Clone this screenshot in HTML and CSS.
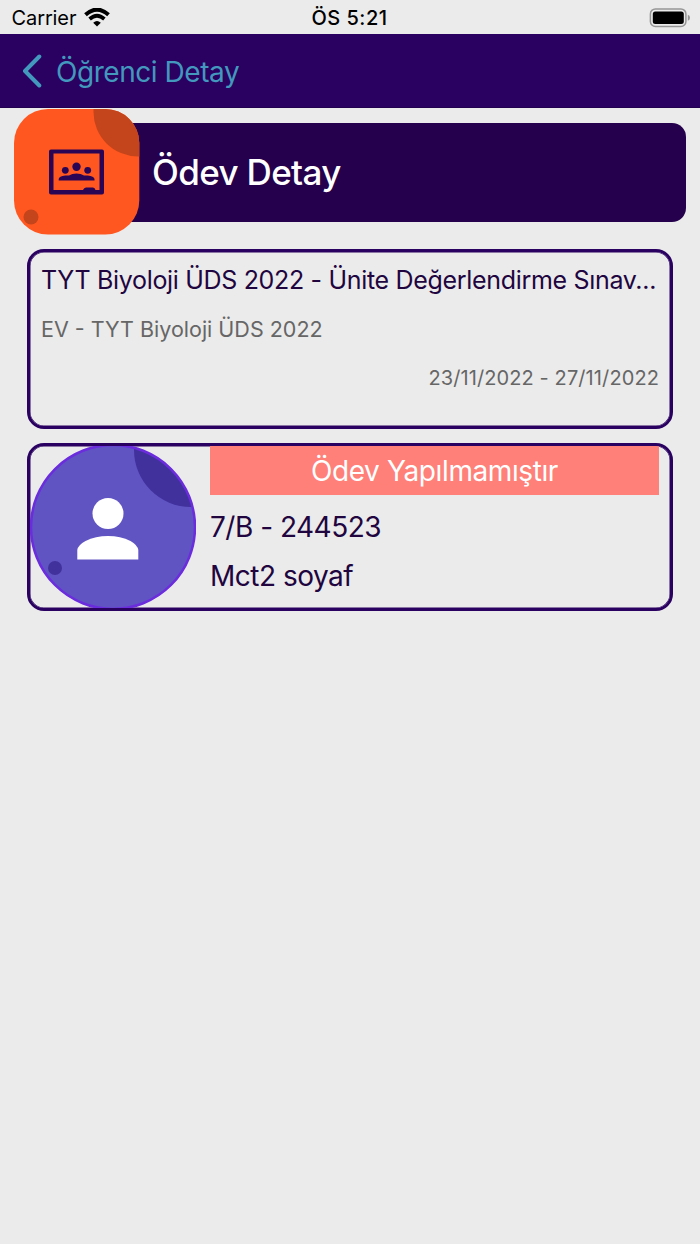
FILE: index.html
```html
<!DOCTYPE html>
<html lang="tr">
<head>
<meta charset="utf-8">
<title>Ödev Detay</title>
<link rel="stylesheet" href="styles.css">
</head>
<body>
<div class="status">
  <div class="status-left"><span class="carrier">Carrier</span>
    <svg class="wifi" width="26" height="19" viewBox="0 0 26 19">
      <path d="M1.500 6.800Q13-3.600 24.500 6.800" fill="none" stroke="#000" stroke-width="4"/>
      <path d="M5.600 11Q13 4.400 20.400 11" fill="none" stroke="#000" stroke-width="3.700"/>
      <path d="M9.200 14.800Q13 11.200 16.800 14.800L13 18.500Z"/>
    </svg>
  </div>
  <span class="time">ÖS 5:21</span>
  <svg class="battery" width="42" height="20" viewBox="0 0 42 20">
    <rect x="1.400" y="0.900" width="35.500" height="17.600" rx="5" fill="none" stroke="#969696" stroke-width="1.500"/>
    <rect x="3.800" y="3.500" width="31" height="12.500" rx="2.500" fill="#000"/>
    <path d="M38.800 6.800Q41 7.500 41 9.800T38.800 12.800Z" fill="#969696"/>
  </svg>
</div>
<nav class="nav">
  <svg class="back" width="20" height="34" viewBox="0 0 20 34"><path d="M17.300 2.500L3 17L17.300 31.500" fill="none" stroke="#4298bd" stroke-width="4" stroke-linecap="round" stroke-linejoin="round"/></svg>
  <span class="nav-title">Öğrenci Detay</span>
</nav>
<main class="page">
  <header class="hero">
    <svg class="tile" width="126" height="126" viewBox="0 0 126 126">
      <clipPath id="tile"><rect width="125.300" height="125.500" rx="34"/></clipPath>
      <g clip-path="url(#tile)">
        <rect width="126" height="126" fill="#ff571f"/>
        <circle cx="124" cy="3" r="44.500" fill="#c4441b"/>
      </g>
      <circle cx="17" cy="108" r="7.500" fill="#c4441b"/>
      <g fill="#2a0555">
        <path fill-rule="evenodd" d="M37 40.500H88Q90 40.500 90 42.500V83.500Q90 85.500 88 85.500H37Q35 85.500 35 83.500V42.500Q35 40.500 37 40.500ZM39.500 44.500V81H69Q70 78.500 72 78.500H79Q81 78.500 81.500 81H85.500V44.500Z"/>
        <circle cx="51.300" cy="61.300" r="3.400"/><circle cx="62.500" cy="57.700" r="4.200"/><circle cx="73.700" cy="61.300" r="3.400"/>
        <path d="M44.700 71.500V70Q45 67 51.300 66.500L55 66.600Q58 64.500 62.500 64.500T70 66.600L73.700 66.500Q80 67 80.500 70V71.500Z"/>
      </g>
    </svg>
    <div class="banner"><h1 class="title">Ödev Detay</h1></div>
  </header>
  <section class="card homework">
    <span class="hw-name">TYT Biyoloji ÜDS 2022 - Ünite Değerlendirme Sınav...</span>
    <span class="hw-source">EV - TYT Biyoloji ÜDS 2022</span>
    <span class="hw-dates">23/11/2022 - 27/11/2022</span>
  </section>
  <section class="card student">
    <svg class="avatar" width="166" height="162" viewBox="0 0 166 162">
      <clipPath id="avatar"><circle cx="83" cy="81" r="82"/></clipPath>
      <circle cx="83" cy="81" r="82.500" fill="#6054c3"/>
      <circle cx="161" cy="4" r="57" fill="#41319c" clip-path="url(#avatar)"/>
      <circle cx="83" cy="81" r="82" fill="none" stroke="#6b2cdd" stroke-width="2.500"/>
      <circle cx="25" cy="122" r="7" fill="#41319c"/>
      <circle cx="78" cy="67.500" r="15.500" fill="#fff"/>
      <path d="M47.300 113.500V104Q48 99 55.500 95Q65.500 90 78 90T100.500 95Q107.500 99 108.300 104V113.500Z" fill="#fff"/>
    </svg>
    <div class="info">
      <div class="state"><span class="state-text">Ödev Yapılmamıştır</span></div>
      <span class="number">7/B - 244523</span>
      <span class="name">Mct2 soyaf</span>
    </div>
  </section>
</main>
</body>
</html>
```
FILE: styles.css
```css
* { box-sizing: border-box; }
body { margin: 0; min-height: 1244px; background: #ebebeb; font-family: Inter, "Liberation Sans", sans-serif; color: #21053f; }
svg { display: block; flex: none; }
span, h1 { white-space: nowrap; }
.status { height: 34px; display: grid; grid-template-columns: 1fr auto 1fr; align-items: center; padding: 0 9px 0 11px; color: #000; }
.status-left { display: flex; align-items: center; gap: 8px; }
.carrier { font-size: 20px; line-height: 34px; letter-spacing: -0.1px; padding: 1px 0 0 0.500px; }
.time { font-size: 20px; font-weight: 500; line-height: 34px; letter-spacing: 0.500px; padding: 1px 3px 0 0; }
.battery { justify-self: end; }
.nav { height: 74px; display: flex; align-items: center; gap: 14px; padding-left: 22px; background: #2a0061; border-bottom: 1px solid #23004f; }
.nav-title { color: #4298bd; font-size: 28px; line-height: 40px; letter-spacing: -0.450px; padding-top: 2px; }
.page { padding: 1px 14px 0; }
.hero { display: flex; align-items: center; height: 126px; }
.tile { z-index: 1; }
.banner { flex: 1; height: 99px; margin-left: -20px; padding-left: 32px; display: flex; align-items: center; background: #25004c; border-radius: 0 14px 14px 0; }
.title { margin: 0; color: #fff; font-size: 35px; font-weight: 500; line-height: 44px; letter-spacing: -0.650px; }
.card { margin: 14px 13px 0; border: 3px solid #2a0061; border-radius: 17px; overflow: hidden; display: flex; box-shadow: inset 0 0 0 0.500px #2a0061; }
.homework { height: 180px; flex-direction: column; padding: 11px 11px 0; }
.hw-name { font-size: 25px; line-height: 34px; letter-spacing: -0.320px; }
.hw-source { margin-top: 17px; color: #666; font-size: 21.500px; line-height: 30px; }
.hw-dates { margin-top: 19px; align-self: flex-end; color: #666; font-size: 20px; line-height: 30px; letter-spacing: 0.100px; }
.student { height: 168px; padding-right: 11px; gap: 14px; }
.info { flex: 1; display: flex; flex-direction: column; }
.state { height: 49px; background: #ff7f79; color: #fff; display: flex; align-items: center; justify-content: center; }
.state-text, .number, .name { font-size: 28px; line-height: 49px; letter-spacing: -0.500px; }
.state-text { padding-top: 1px; letter-spacing: -0.400px; }
.number { margin-top: 8px; }
```
